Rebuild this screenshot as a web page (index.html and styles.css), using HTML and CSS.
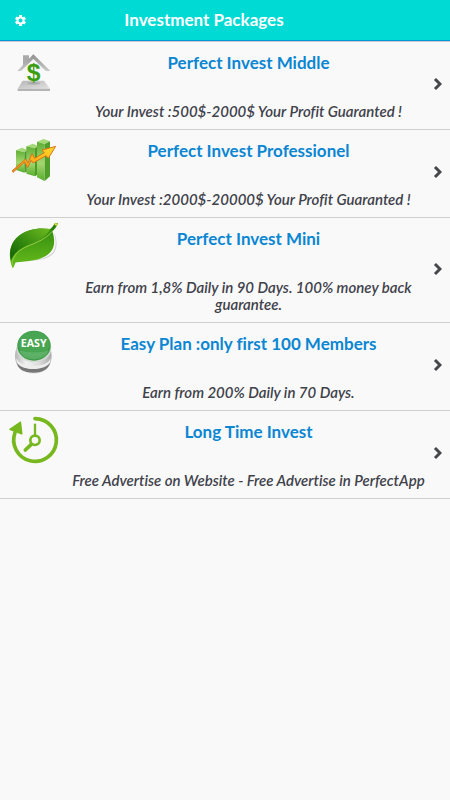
FILE: index.html
```html
<!DOCTYPE html>
<html lang="en">
<head>
    <meta charset="UTF-8">
    <meta name="viewport" content="width=device-width, initial-scale=1.0">
    <title>Investment Packages</title>
    <link rel="stylesheet" href="styles.css">
</head>
<body>
    <header class="header">
        <button class="settings-btn" type="button" aria-label="Settings">
            <svg viewBox="0 0 22 22" width="11" height="11">
                <g fill="#fff">
                    <rect x="8" y="0" width="6" height="22" rx="1"/>
                    <rect x="8" y="0" width="6" height="22" rx="1" transform="rotate(60 11 11)"/>
                    <rect x="8" y="0" width="6" height="22" rx="1" transform="rotate(120 11 11)"/>
                </g>
                <circle cx="11" cy="11" r="6" fill="#00dad4" stroke="#fff" stroke-width="4"/>
            </svg>
        </button>
        <h1 class="header-title">Investment Packages</h1>
    </header>

    <main>
        <ul class="package-list">
            <li>
                <a class="package" href="#">
                    <svg class="package-icon" viewBox="0 0 192 180" aria-hidden="true">
                        <defs>
                            <linearGradient id="roof" x1="0" y1="0" x2="0" y2="1">
                                <stop offset="0" stop-color="#8f8f8f"/>
                                <stop offset="1" stop-color="#c9c9c9"/>
                            </linearGradient>
                            <linearGradient id="floor" x1="0" y1="0" x2="1" y2="1">
                                <stop offset="0" stop-color="#b5b5b5"/>
                                <stop offset="1" stop-color="#e2e2e2"/>
                            </linearGradient>
                        </defs>
                        <path d="M69 40h18v14L69 72z" fill="#aaa"/>
                        <path d="M58 83L100 43l45 40z" fill="#f4f4f4"/>
                        <path d="M52 87L100 37l51 50h-13L100 51 63 87z" fill="url(#roof)"/>
                        <path d="M68 116h64l18 24H53z" fill="url(#floor)"/>
                        <path d="M53 140h97v7H53z" fill="#b4b4b4"/>
                        <ellipse cx="101" cy="124" rx="20" ry="4" fill="#999" opacity=".6"/>
                        <text class="dollar" x="101" y="117">$</text>
                    </svg>
                    <div class="package-text">
                        <h2 class="package-name">Perfect Invest Middle</h2>
                        <p class="package-info">Your Invest :500$-2000$ Your Profit Guaranted !</p>
                    </div>
                    <svg class="chevron" viewBox="0 0 9 14" aria-hidden="true"><path d="M2 2l5 5-5 5"/></svg>
                </a>
            </li>
            <li>
                <a class="package" href="#">
                    <svg class="package-icon" viewBox="0 0 192 180" aria-hidden="true">
                        <defs>
                            <linearGradient id="bar" x1="0" y1="0" x2="0" y2="1">
                                <stop offset="0" stop-color="#5fae35"/>
                                <stop offset=".55" stop-color="#a5d66f"/>
                                <stop offset="1" stop-color="#57ad2c"/>
                            </linearGradient>
                            <linearGradient id="arrow" x1="0" y1="1" x2="1" y2="0">
                                <stop offset="0" stop-color="#f08a18"/>
                                <stop offset=".6" stop-color="#ffb91c"/>
                                <stop offset="1" stop-color="#ffdf28"/>
                            </linearGradient>
                        </defs>
                        <path d="M48 61l18-8 17 7-10 7z" fill="#a4d977"/>
                        <path d="M48 61l25 6v61l-25-8z" fill="url(#bar)"/>
                        <path d="M73 67l10-7v64l-10 4z" fill="#4d9c2a"/>
                        <path d="M79 49l20-8 15 7-9 7z" fill="#a4d977"/>
                        <path d="M79 49l26 6v84l-26-8z" fill="url(#bar)"/>
                        <path d="M105 55l9-7v85l-9 6z" fill="#4d9c2a"/>
                        <path d="M111 35l20-8 19 7-16 8z" fill="#a4d977"/>
                        <path d="M111 35l23 7v111l-23-11z" fill="url(#bar)"/>
                        <path d="M134 42l16-8v105l-16 14z" fill="#4f9f2a"/>
                        <path d="M37 122L77 87l7 12 12-28 8 14 29-17-7-8 41-11-22 36-7-8-39 22-6-8-10 22-9-17-35 31z" fill="url(#arrow)" stroke="#d9741c" stroke-width="3" stroke-linejoin="round"/>
                    </svg>
                    <div class="package-text">
                        <h2 class="package-name">Perfect Invest Professionel</h2>
                        <p class="package-info">Your Invest :2000$-20000$ Your Profit Guaranted !</p>
                    </div>
                    <svg class="chevron" viewBox="0 0 9 14" aria-hidden="true"><path d="M2 2l5 5-5 5"/></svg>
                </a>
            </li>
            <li>
                <a class="package" href="#">
                    <svg class="package-icon" viewBox="0 0 192 180" aria-hidden="true">
                        <defs>
                            <linearGradient id="leafTop" x1="0" y1="1" x2="1" y2="0">
                                <stop offset="0" stop-color="#145c08"/>
                                <stop offset=".4" stop-color="#2e850d"/>
                                <stop offset="1" stop-color="#70bb20"/>
                            </linearGradient>
                            <linearGradient id="leafBottom" x1="0" y1="0" x2="0" y2="1">
                                <stop offset="0" stop-color="#2b860d"/>
                                <stop offset="1" stop-color="#69bd1c"/>
                            </linearGradient>
                        </defs>
                        <path d="M42 132c45-2 110-5 122-40 5-17 3-31-3-47l4 5c7 20 6 38-1 51-22 34-82 25-117 33z" fill="#bbb" opacity=".6"/>
                        <path d="M38 151C24 119 25 78 57 53c25-20 60-25 94-20 4-3 10-11 14-18l9 1c-3 9-10 19-17 24 8 24 9 49-8 65-24 24-65 24-102 28-3 6-4 13-9 18z" fill="url(#leafBottom)"/>
                        <path d="M33 127C26 98 34 71 57 53c25-20 60-25 94-20-10 19-29 31-52 41-32 14-55 25-66 53z" fill="url(#leafTop)"/>
                        <path d="M36 141c2-30 20-46 53-59 31-12 51-23 68-42" fill="none" stroke="#96cc43" stroke-width="3"/>
                        <path d="M153 35c7-5 12-12 16-19" fill="none" stroke="#287b0d" stroke-width="5"/>
                        <path d="M166 22l4-6" stroke="#dce32f" stroke-width="7"/>
                    </svg>
                    <div class="package-text">
                        <h2 class="package-name">Perfect Invest Mini</h2>
                        <p class="package-info">Earn from 1,8% Daily in 90 Days. 100% money back guarantee.</p>
                    </div>
                    <svg class="chevron" viewBox="0 0 9 14" aria-hidden="true"><path d="M2 2l5 5-5 5"/></svg>
                </a>
            </li>
            <li>
                <a class="package" href="#">
                    <svg class="package-icon" viewBox="0 3 192 180" aria-hidden="true">
                        <defs>
                            <linearGradient id="base" x1="0" y1="0" x2="1" y2="0">
                                <stop offset="0" stop-color="#b5b5b5"/>
                                <stop offset=".3" stop-color="#f1f1f1"/>
                                <stop offset=".65" stop-color="#ddd"/>
                                <stop offset="1" stop-color="#aaa"/>
                            </linearGradient>
                        </defs>
                        <path d="M45 101c0-70 110-70 110 0 0 34-22 54-55 54s-55-20-55-54z" fill="url(#base)"/>
                        <path d="M50 119c10 29 90 29 101 0-4 20-21 33-51 33s-47-12-50-33z" fill="#777"/>
                        <path d="M49 108c10 32 94 32 103 0l-1 11c-13 28-89 28-101 0z" fill="#ededed"/>
                        <ellipse cx="102" cy="79" rx="52" ry="42" fill="#d2dcd2"/>
                        <ellipse cx="102" cy="71" rx="50" ry="45" fill="#3e9b49"/>
                        <ellipse cx="102" cy="65" rx="47" ry="37" fill="#48a552"/>
                        <path d="M58 85c24 9 65 9 88 0-8 35-79 36-88 0z" fill="#68b870" opacity=".7"/>
                        <text class="easy" x="101" y="76">EASY</text>
                    </svg>
                    <div class="package-text">
                        <h2 class="package-name">Easy Plan :only first 100 Members</h2>
                        <p class="package-info">Earn from 200% Daily in 70 Days.</p>
                    </div>
                    <svg class="chevron" viewBox="0 0 9 14" aria-hidden="true"><path d="M2 2l5 5-5 5"/></svg>
                </a>
            </li>
            <li>
                <a class="package" href="#">
                    <svg class="package-icon" viewBox="0 3 192 180" aria-hidden="true">
                        <g fill="none" stroke="#77b81e" stroke-linecap="round">
                            <path d="M105 26a64 64 0 1 1-60 42" stroke-width="11"/>
                            <path d="M105 44v32" stroke-width="7"/>
                            <path d="M93 104l-17 16" stroke-width="11"/>
                            <circle cx="105" cy="91" r="14" stroke-width="8"/>
                        </g>
                        <path d="M30 58l31-21 4 34z" fill="#77b81e" stroke="#77b81e" stroke-width="5" stroke-linejoin="round"/>
                    </svg>
                    <div class="package-text">
                        <h2 class="package-name">Long Time Invest</h2>
                        <p class="package-info">Free Advertise on Website - Free Advertise in PerfectApp</p>
                    </div>
                    <svg class="chevron" viewBox="0 0 9 14" aria-hidden="true"><path d="M2 2l5 5-5 5"/></svg>
                </a>
            </li>
        </ul>
    </main>
</body>
</html>
```
FILE: styles.css
```css
body {
    font-family: Lato, "Liberation Sans", sans-serif;
    font-variant-ligatures: none;
    background-color: #f9f9f9;
    color: #3f424b;
    margin: 0;
}

.header {
    display: flex;
    align-items: center;
    height: 40px;
    padding-right: 82px;
    background-color: #00dad4;
    border-bottom: 1px solid #0099d4;
    box-shadow: 0 1px 0 #c8c8d0;
    margin-bottom: 1px;
}

.settings-btn {
    display: flex;
    align-items: center;
    justify-content: center;
    width: 40px;
    height: 40px;
    padding: 0;
    border: none;
    background: none;
    cursor: pointer;
}

.header-title {
    flex: 1;
    margin: 0;
    font-size: 17px;
    line-height: 22px;
    text-align: center;
    color: #fff;
}

.package-list {
    list-style: none;
    margin: 0;
    padding: 0;
}

.package {
    display: flex;
    align-items: flex-start;
    padding-right: 8px;
    border-bottom: 1px solid #d0d0d0;
    color: inherit;
    text-decoration: none;
}

.package-icon {
    flex: none;
    width: 64px;
    height: 60px;
}

.package-text {
    flex: 1;
    padding: 10px 0 9px;
    text-align: center;
}

.package-name {
    margin: 0 0 29px;
    font-size: 17px;
    line-height: 22px;
    color: #0a86d2;
}

.package-info {
    margin: 0;
    font-size: 15px;
    font-weight: 600;
    font-style: italic;
    line-height: 17px;
}

.chevron {
    flex: none;
    align-self: center;
    width: 9px;
    height: 14px;
    padding-bottom: 3px;
    fill: none;
    stroke: #45474d;
    stroke-width: 3;
}

.dollar {
    font-family: "Liberation Sans", sans-serif;
    font-size: 74px;
    font-weight: bold;
    text-anchor: middle;
    fill: #3a9d12;
}

.easy {
    font-family: "Open Sans", sans-serif;
    font-size: 32px;
    font-weight: bold;
    text-anchor: middle;
    fill: #fff;
}
```
